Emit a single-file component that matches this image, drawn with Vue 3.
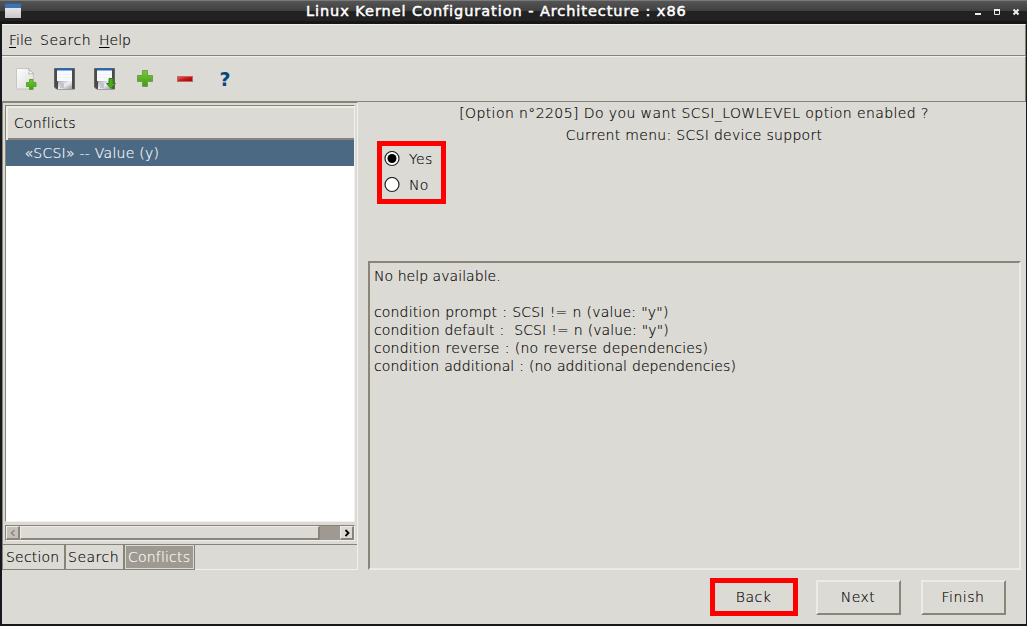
<script setup>
import { ref } from 'vue'
const answer = ref('Yes')
const tabs = ['Section', 'Search', 'Conflicts']
const help = [
  { text: 'No help available.', cls: 'h0' },
  { text: ' ', cls: 'h0' },
  { text: 'condition prompt : SCSI != n (value: "y")', cls: 'h1' },
  { text: 'condition default :  SCSI != n (value: "y")', cls: 'h2' },
  { text: 'condition reverse : (no reverse dependencies)', cls: 'h3' },
  { text: 'condition additional : (no additional dependencies)', cls: 'h4' }
]
</script>

<template>
  <div class="window">
    <header class="title">
      <svg class="appicon" width="16" height="15" viewBox="0 0 16 15">
        <defs><linearGradient id="ap" x1="0" y1="0" x2="0" y2="1"><stop offset="0" stop-color="#f4f4f4" /><stop offset="1" stop-color="#c9c9c9" /></linearGradient></defs>
        <rect width="16" height="15" fill="url(#ap)" /><rect width="16" height="5" fill="#3d73b4" /><rect width="16" height="1" fill="#315f9b" />
      </svg>
      <span class="caption">Linux Kernel Configuration - Architecture : x86</span>
      <svg class="controls" width="46" height="8" viewBox="0 0 46 8" fill="none" stroke="#ededed">
        <path d="M0 6h6" stroke-width="2" />
        <path d="M19.500 1v5.500h5v-5.500" /><path d="M19 2h6" stroke-width="2" />
        <path d="M38.500 1.500l5 5M43.500 1.500l-5 5" stroke-width="2" />
      </svg>
    </header>
    <nav class="menu"><span class="m1"><u>F</u>ile</span><span class="m2">Search</span><span class="m3"><u>H</u>elp</span></nav>
    <div class="toolbar">
      <svg width="220" height="24" viewBox="0 0 220 24">
        <defs>
          <linearGradient id="pg" x1="0" y1="0" x2="1" y2="1"><stop offset="0" stop-color="#fff" /><stop offset="1" stop-color="#dadada" /></linearGradient>
          <linearGradient id="gr" x1="0" y1="0" x2="0" y2="1"><stop offset="0" stop-color="#79c83b" /><stop offset="1" stop-color="#3f9c10" /></linearGradient>
          <linearGradient id="rd" x1="0" y1="0" x2="1" y2="1"><stop offset="0" stop-color="#e86a6a" /><stop offset=".5" stop-color="#cc1414" /><stop offset="1" stop-color="#a80000" /></linearGradient>
          <linearGradient id="mt" x1="0" y1="0" x2="1" y2="1"><stop offset="0" stop-color="#a9a9b0" /><stop offset=".5" stop-color="#eeeef4" /><stop offset="1" stop-color="#9a9aa3" /></linearGradient>
          <g id="disk">
            <path d="M.5 .5h20v20.500h-18l-2-2z" fill="#484a4c" stroke="#626466" />
            <rect x="3" y="1" width="15" height="12" fill="#f8f9fa" /><rect x="3" y="0" width="15" height="2.500" fill="#2e67ad" />
            <path d="M4 6.500h13M4 9.500h13" stroke="#f0f1f2" />
            <rect x="4" y="13" width="14" height="8" fill="url(#mt)" /><rect x="6" y="15" width="4" height="5" fill="#c5c6cd" />
          </g>
        </defs>
        <g transform="translate(-1 0)">
          <path d="M1.500 1.500h12l5 5v15.500h-17z" fill="url(#pg)" stroke="#c6c6c3" />
          <path d="M13.500 1.500q2 3 0 5.500q3-.5 5 0z" fill="#fff" stroke="#aaa" stroke-width=".8" />
          <path d="M14.500 12.500h3.500v3h3v4h-3v3h-3.500v-3h-3v-4h3z" fill="url(#gr)" stroke="#59a52c" />
          <use href="#disk" x="39" y="1" /><use href="#disk" x="79" y="1" />
          <path d="M94 11.500h4v5h2.500l-4.500 5l-4.500-5h2.500z" fill="#4baa1b" stroke="#34820d" />
        </g>
        <path d="M126.500 3.500h5v5h5v6h-5v5h-5v-5h-5v-6h5z" fill="url(#gr)" stroke="#6c9f4c" />
        <rect x="161.500" y="9.500" width="15" height="5" fill="url(#rd)" stroke="#b86a6a" />
        <text x="203.500" y="19" class="question" textLength="11" lengthAdjust="spacingAndGlyphs">?</text>
      </svg>
    </div>
    <div class="body">
      <aside class="side">
        <div class="tree">
          <div class="treehead">Conflicts</div>
          <div class="row">«SCSI» -- Value (y)</div>
        </div>
        <div class="scroll">
          <div class="arrow off"><svg width="6" height="8" viewBox="0 0 6 8"><path d="M4.500 1L1.500 4l3 3" /></svg></div>
          <div class="thumb"></div><div class="trough"></div>
          <div class="arrow"><svg width="6" height="8" viewBox="0 0 6 8"><path d="M1.500 1l3 3l-3 3" /></svg></div>
        </div>
        <div class="tabs"><div v-for="t in tabs" :key="t" class="tab" :class="t.toLowerCase()">{{ t }}</div></div>
      </aside>
      <main class="main">
        <div class="prompt"><p class="p1">[Option n°2205] Do you want SCSI_LOWLEVEL option enabled ?</p><p class="p2">Current menu: SCSI device support</p></div>
        <div class="choices">
          <label v-for="o in ['Yes', 'No']" :key="o" @click="answer = o">
            <svg width="16" height="16" viewBox="0 0 16 16"><circle cx="8" cy="7.500" r="7" fill="#fff" stroke="#222" stroke-width="1.200" /><circle v-if="answer === o" cx="8" cy="7.500" r="4.500" /></svg>
            <span>{{ o }}</span>
          </label>
        </div>
        <div class="help"><div v-for="(l, i) in help" :key="i" :class="l.cls">{{ l.text }}</div></div>
        <div class="buttons"><div class="btn marked">Back</div><div class="btn">Next</div><div class="btn">Finish</div></div>
      </main>
    </div>
  </div>
</template>

<style>
body { margin: 0; overflow: hidden; }
</style>
<style scoped>
* { box-sizing: border-box; }
.window { width: 1027px; height: 626px; background: #dcdad5; border: solid #17181b; border-width: 0 1px 2px 2px; font: 200 14px/18px "DejaVu Sans", "DejaVu Sans Light", sans-serif; color: #000; -webkit-text-stroke: .15px currentColor; display: flex; flex-direction: column; }
.title { height: 24px; margin: 0 -1px 0 -2px; flex: none; display: flex; align-items: center; background: linear-gradient(#777a79 0 1px, #555 1px, #3f3f3f 11px, #222 11px 21px, #161616 21px); }
.appicon { margin: -3px 0 0 5px; }
.caption { margin-left: 285px; width: 380px; color: #fff; font-size: 14.500px; font-weight: 400; -webkit-text-stroke: .5px #fff; letter-spacing: .94px; white-space: nowrap; line-height: 22px; height: 24px; }
.controls { margin-left: 289px; margin-top: -1px; }
.menu { height: 32px; flex: none; border-top: 1px solid #f1f0ee; border-bottom: 1px solid #868379; border-right: 1px solid #868379; display: flex; padding: 6px 0 0 7px; }
.menu span { white-space: nowrap; }
.m1 { width: 31px; } .m2 { width: 59px; letter-spacing: .5px; }
u { text-underline-offset: 2px; text-decoration-thickness: 1px; }
.toolbar { height: 46px; flex: none; border-top: 1px solid #f1f0ee; border-bottom: 1px solid #868379; border-right: 1px solid #868379; padding: 10px 0 0 14px; }
.toolbar svg { display: block; }
.question { font: 700 20px "DejaVu Sans", sans-serif; fill: #0b4580; stroke: none; -webkit-text-stroke: 0; }
.body { flex: 1; display: flex; min-height: 0; }
.side { width: 356px; height: 468px; border: solid #f1f0ee; border-width: 1px 1px 1px 0; border-top-color: #868379; display: flex; flex-direction: column; box-shadow: inset 1px 0 #868379; }
.tree { margin: 2px 1px 0 3px; width: 350px; height: 417px; flex: none; border: 1px solid #868379; border-right-color: #f1f0ee; border-bottom-color: #f1f0ee; background: #fff; }
.treehead { height: 34px; background: #dcdad5; border: solid #eeebe7; border-width: 2px 0 0 2px; box-shadow: inset 0 -2px #8b8479; padding: 6px 0 0 6px; letter-spacing: .15px; }
.row { height: 26px; background: #4b6983; color: #fff; padding: 4px 0 0 18.500px; letter-spacing: .25px; }
.scroll { margin: 3px 0 0 3px; width: 350px; height: 16px; flex: none; border: 1px solid #868379; border-right-color: #f1f0ee; border-bottom-color: #f1f0ee; display: flex; background: #9e9a91; }
.arrow, .thumb { border: solid; border-width: 1px 2px 2px 1px; border-color: #eeebe7 #8b8479 #8b8479 #eeebe7; background: #dcdad5; }
.arrow { width: 14px; display: flex; align-items: center; justify-content: center; }
.arrow svg { fill: none; stroke: #000; stroke-width: 1.800; }
.arrow.off { background: #c4c1ba; } .arrow.off svg { stroke: #8b8479; stroke-width: 1.400; }
.thumb { width: 300px; } .trough { flex: 1; }
.tabs { height: 26px; flex: none; margin-top: 3px; border-top: 1px solid #868379; display: flex; }
.tab { border: solid #868379; border-width: 0 1px 1px; line-height: 24px; padding-left: 3px; white-space: nowrap; letter-spacing: .2px; }
.section { width: 63px; } .search { width: 59px; padding-left: 2px; letter-spacing: .5px; }
.conflicts { width: 71px; background: #9e9a91; color: #fff; box-shadow: inset 0 0 0 1px #dcdad5; }
.main { flex: 1; display: flex; flex-direction: column; }
.prompt { height: 39px; text-align: center; line-height: 22px; margin-left: 4px; }
.prompt p { margin: 0; white-space: pre; }
.p1 { letter-spacing: .41px; } .p2 { letter-spacing: .3px; }
.choices { margin-left: 19px; width: 69px; height: 63px; border: 5px solid #f00; padding: 0 0 0 2.500px; }
.choices label { display: flex; height: 26px; align-items: center; gap: 9px; letter-spacing: .3px; }
.choices svg { margin-left: -.5px; }
.help { margin: 57px 0 0 10px; width: 653px; height: 309px; border: 2px solid #8b8479; border-right-color: #eeebe7; border-bottom-color: #eeebe7; padding: 4px; flex: none; white-space: pre; }
.help div { height: 18px; }
.h0 { letter-spacing: .05px; }
.h1 { letter-spacing: .16px; word-spacing: .5px; }
.h2 { letter-spacing: .1px; word-spacing: .4px; }
.h3 { letter-spacing: .18px; word-spacing: .6px; }
.h4 { letter-spacing: .06px; word-spacing: .4px; }
.buttons { display: flex; align-items: center; margin: 8px 0 0 352px; height: 38px; }
.btn { width: 85px; height: 35px; border: solid; border-width: 2px; border-color: #eeebe7 #8b8479 #8b8479 #eeebe7; text-align: center; line-height: 30px; margin-left: 20px; letter-spacing: .5px; padding-right: 1px; }
.btn.marked { width: 88px; height: 38px; border: 5px solid #f00; margin: 0 -2px 0 0; line-height: 28px; }
</style>
